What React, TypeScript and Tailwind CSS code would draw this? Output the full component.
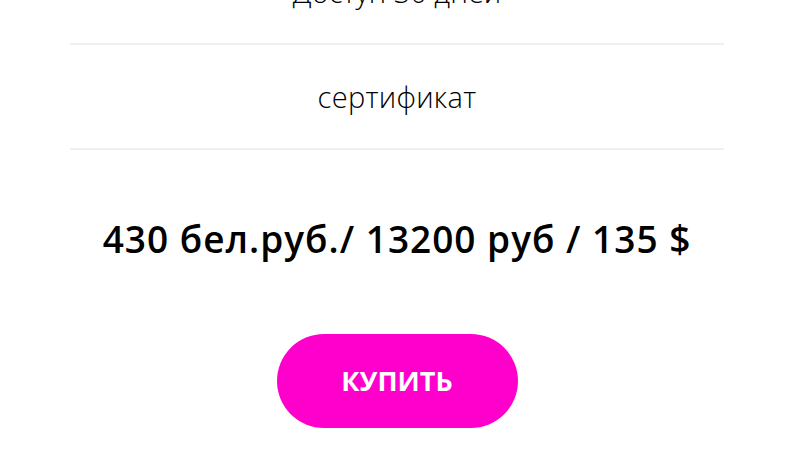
export default function App() {
  return (
    <div className="h-[450px] w-[800px] overflow-hidden bg-white text-black [font-family:'Open_Sans',sans-serif]">
      <div className="ml-[70px] mt-[-58px] flex w-[654px] flex-col items-center">
        <div className="flex h-[103px] w-full items-center justify-center border-b-2 border-[#efefef] pb-[2px] text-[29px] font-light">
          Доступ 30 дней
        </div>
        <div className="flex h-[105px] w-full items-center justify-center border-b-2 border-[#efefef] text-[29px] font-light tracking-[0.3px]">
          сертификат
        </div>
        <div className="flex h-[184px] w-full items-center justify-center pb-[6px] text-[37px] font-[560] tracking-[1px]">
          430 бел.руб./ 13200 руб / 135 $
        </div>
        <button className="flex h-[94px] w-[241px] items-center justify-center rounded-full bg-[#ff00cc] text-[27px] font-bold text-white">
          КУПИТЬ
        </button>
      </div>
    </div>
  );
}
